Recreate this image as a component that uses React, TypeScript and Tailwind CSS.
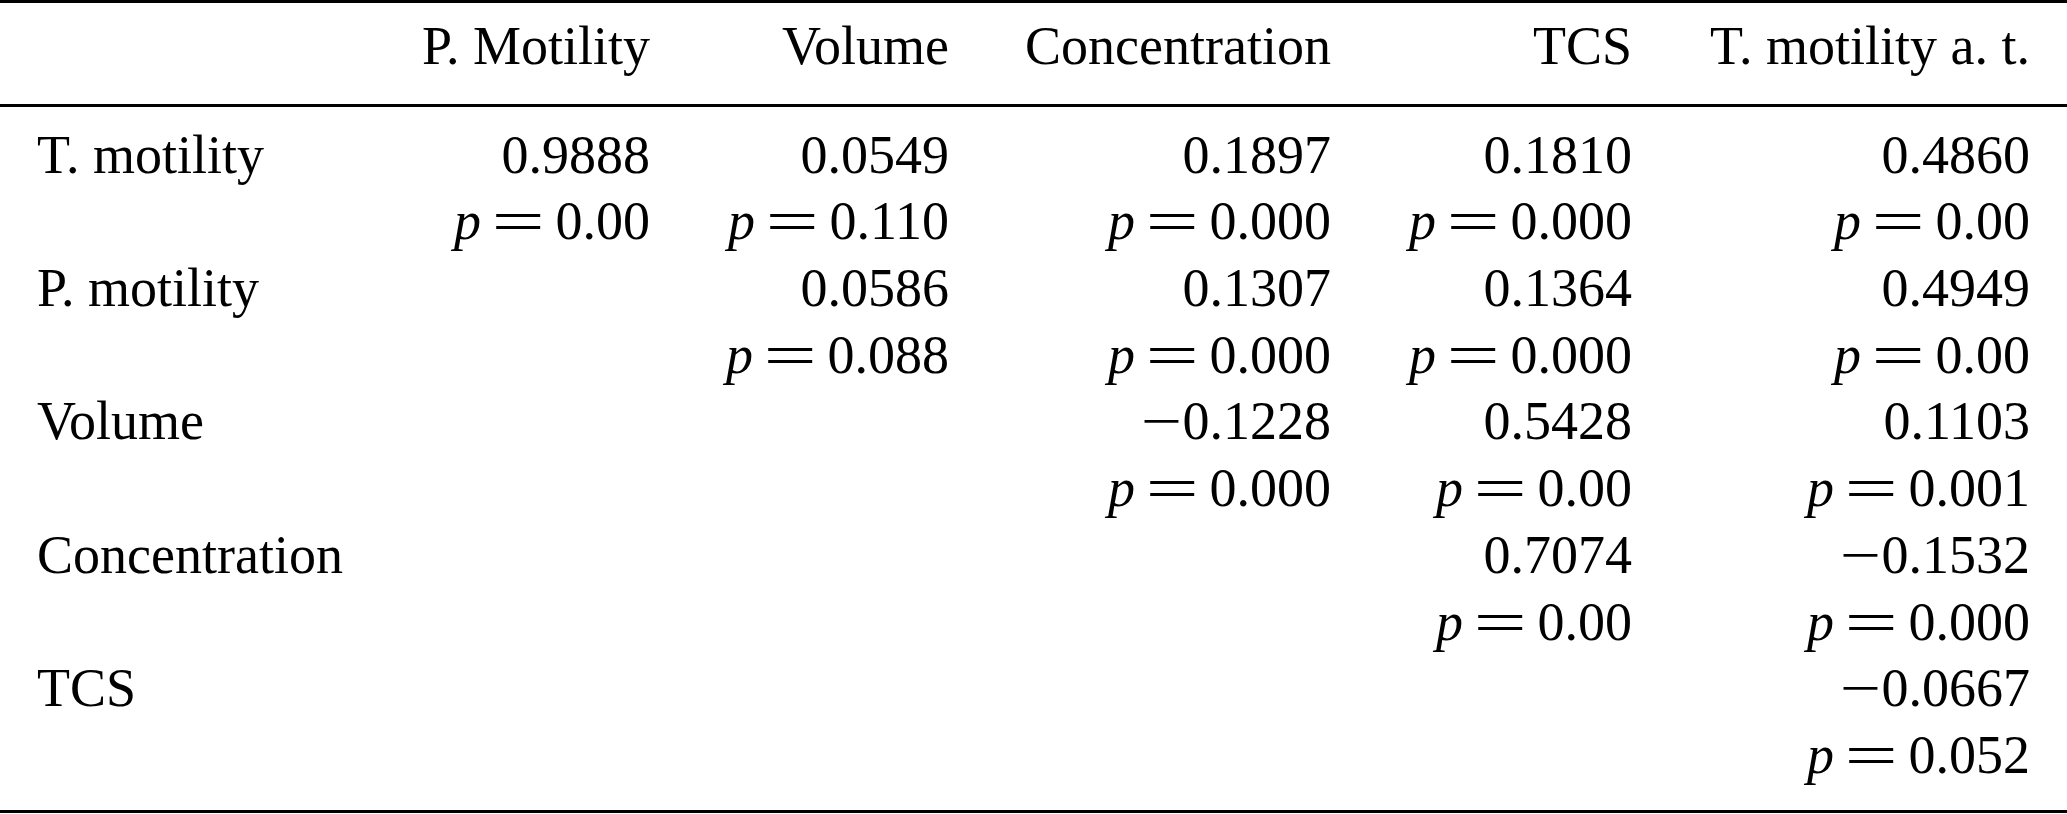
type Cell = { r: string; p: string } | null;

const header = ["P. Motility", "Volume", "Concentration", "TCS", "T. motility a. t."];

const rows: { label: string; cells: Cell[] }[] = [
  {
    label: "T. motility",
    cells: [
      { r: "0.9888", p: "0.00" },
      { r: "0.0549", p: "0.110" },
      { r: "0.1897", p: "0.000" },
      { r: "0.1810", p: "0.000" },
      { r: "0.4860", p: "0.00" },
    ],
  },
  {
    label: "P. motility",
    cells: [
      null,
      { r: "0.0586", p: "0.088" },
      { r: "0.1307", p: "0.000" },
      { r: "0.1364", p: "0.000" },
      { r: "0.4949", p: "0.00" },
    ],
  },
  {
    label: "Volume",
    cells: [
      null,
      null,
      { r: "-0.1228", p: "0.000" },
      { r: "0.5428", p: "0.00" },
      { r: "0.1103", p: "0.001" },
    ],
  },
  {
    label: "Concentration",
    cells: [null, null, null, { r: "0.7074", p: "0.00" }, { r: "-0.1532", p: "0.000" }],
  },
  {
    label: "TCS",
    cells: [null, null, null, null, { r: "-0.0667", p: "0.052" }],
  },
];

const grid = "grid grid-cols-[313px_300px_299px_382px_301px_398px] px-[37px]";

function Num({ v }: { v: string }) {
  if (!v.startsWith("-")) return <>{v}</>;
  return (
    <>
      <span className="inline-block mx-[6px] scale-x-[1.35]">{"\u2212"}</span>
      {v.slice(1)}
    </>
  );
}

function PValue({ v }: { v: string }) {
  return (
    <>
      <span className="italic">p</span>
      <span className="inline-block mx-[22px] scale-x-[1.75] scale-y-[1.1]">=</span>
      {v}
    </>
  );
}

export default function App() {
  return (
    <main className="w-[2067px] h-[814px] bg-white text-black font-['Liberation_Serif',serif] text-[54px] leading-[66.7px]">
      <div className="border-y-[3px] border-black">
        <div className={`${grid} pt-[10px] pb-[24px] border-b-[3px] border-black`}>
          <div />
          {header.map((h) => (
            <div key={h} className="text-right whitespace-nowrap">
              {h}
            </div>
          ))}
        </div>
        <div className={`${grid} pt-[15px] pb-[21px]`}>
          {rows.map((row) => (
            <>
              <div key={row.label + "-a"} className="whitespace-nowrap">
                {row.label}
              </div>
              {row.cells.map((c, i) => (
                <div key={row.label + i + "a"} className="text-right whitespace-nowrap">
                  {c ? <Num v={c.r} /> : ""}
                </div>
              ))}
              <div key={row.label + "-b"} />
              {row.cells.map((c, i) => (
                <div key={row.label + i + "b"} className="text-right whitespace-nowrap h-[66.7px]">
                  {c ? <PValue v={c.p} /> : ""}
                </div>
              ))}
            </>
          ))}
        </div>
      </div>
    </main>
  );
}
